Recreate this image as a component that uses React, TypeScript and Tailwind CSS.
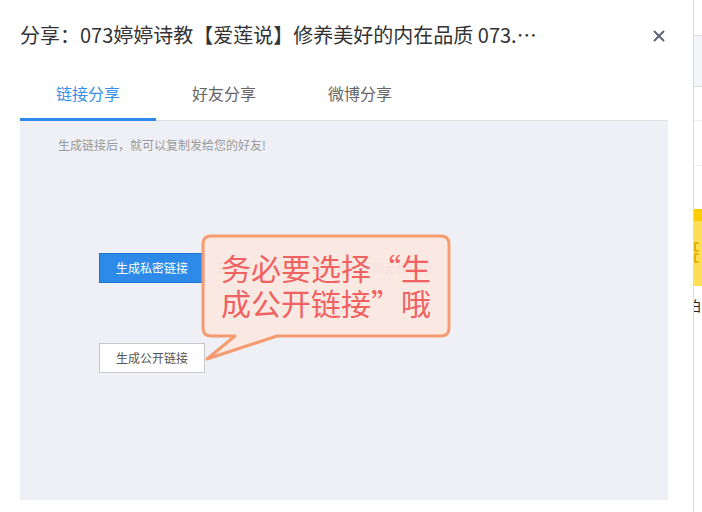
import { X } from 'lucide-react';

const tabs = ['链接分享', '好友分享', '微博分享'];

function Callout() {
  return (
    <div className="absolute left-[201px] top-[234px] h-[128px] w-[252px]">
      <svg width="252" height="128" viewBox="0 0 252 128" className="absolute inset-0">
        <path
          d="M10 2 H240 Q248 2 248 10 V94 Q248 102 240 102 H76 L6 125 L34 102 H10 Q2 102 2 94 V10 Q2 2 10 2 Z"
          fill="#fde6df"
          fillOpacity="0.82"
          stroke="#f59b6f"
          strokeWidth="3"
          strokeLinejoin="round"
        />
      </svg>
      <div className="absolute left-[20px] top-[16px] w-[216px] text-[30px] leading-[35px] text-[#f06262]">
        务必要选择“生
        <br />
        成公开链接”哦
      </div>
    </div>
  );
}

export default function App() {
  return (
    <div
      lang="zh-CN"
      className="flex h-[512px] w-[702px] overflow-hidden bg-white"
      style={{ fontFamily: '"Noto Sans CJK SC", sans-serif' }}
    >
      <div className="relative w-[693px] shrink-0 pl-[20px] pr-[25px]">
        <div className="flex h-[66px] items-start justify-between pt-[22px]">
          <h1 className="h-[26px] text-[20px] leading-[26px] text-[#333]">
            分享：073婷婷诗教【爱莲说】修养美好的内在品质 073.…
          </h1>
          <X className="mt-[5px] h-[18px] w-[18px] text-[#60607a]" strokeWidth={2.6} />
        </div>

        <div className="flex h-[55px] border-b border-[#e0e0e0]">
          {tabs.map((t, i) => (
            <div
              key={t}
              className={`relative flex w-[136px] items-center justify-center text-[16px] ${
                i === 0 ? 'text-[#3a8ee6]' : 'text-[#666]'
              }`}
            >
              {t}
              {i === 0 && <span className="absolute -bottom-px left-0 h-[3px] w-full bg-[#2e89e6]" />}
            </div>
          ))}
        </div>

        <div className="h-[379px] bg-[#eff0f5] pl-[38px] pt-[15px]">
          <p className="text-[12px] leading-[18px] text-[#999]">生成链接后，就可以复制发给您的好友!</p>

          <div className="ml-[41px] mt-[99px] flex items-center gap-[11px]">
            <button className="h-[30px] w-[106px] border border-[#1f70cc] bg-[#2e8ae8] text-[12px] text-white">
              生成私密链接
            </button>
            <span className="text-[12px] text-[#c4c4c4]">只有输入访问码才能查看，否则无权访问</span>
          </div>

          <button className="ml-[41px] mt-[60px] h-[30px] w-[106px] border border-[#c8c8c8] bg-white text-[12px] text-[#555]">
            生成公开链接
          </button>
        </div>

        <Callout />
      </div>

      <div className="w-px shrink-0 bg-[#dcdcdc]" />

      <div className="flex-1 overflow-hidden">
        <div className="h-[35px]" />
        <div className="h-[52px] border-y border-[#dedede] bg-[#f4f5fa]" />
        <div className="h-[34px] border-b border-[#eeeeee]" />
        <div className="h-[45px] border-b border-[#eeeeee]" />
        <div className="h-[43px]" />
        <div className="h-[12px] bg-[#ffcc00]" />
        <div className="h-[65px] bg-[#ffdf55] pt-[21px]">
          <div className="h-[10px] w-[5px] rounded-[2px] border-2 border-r-0 border-[#e8b000]" />
          <div className="mt-[1px] h-[10px] w-[5px] rounded-[2px] border-2 border-r-0 border-[#e8b000]" />
        </div>
        <div className="-ml-[7px] mt-[10px] text-[14px] leading-[18px] text-[#222]">泊</div>
      </div>
    </div>
  );
}
